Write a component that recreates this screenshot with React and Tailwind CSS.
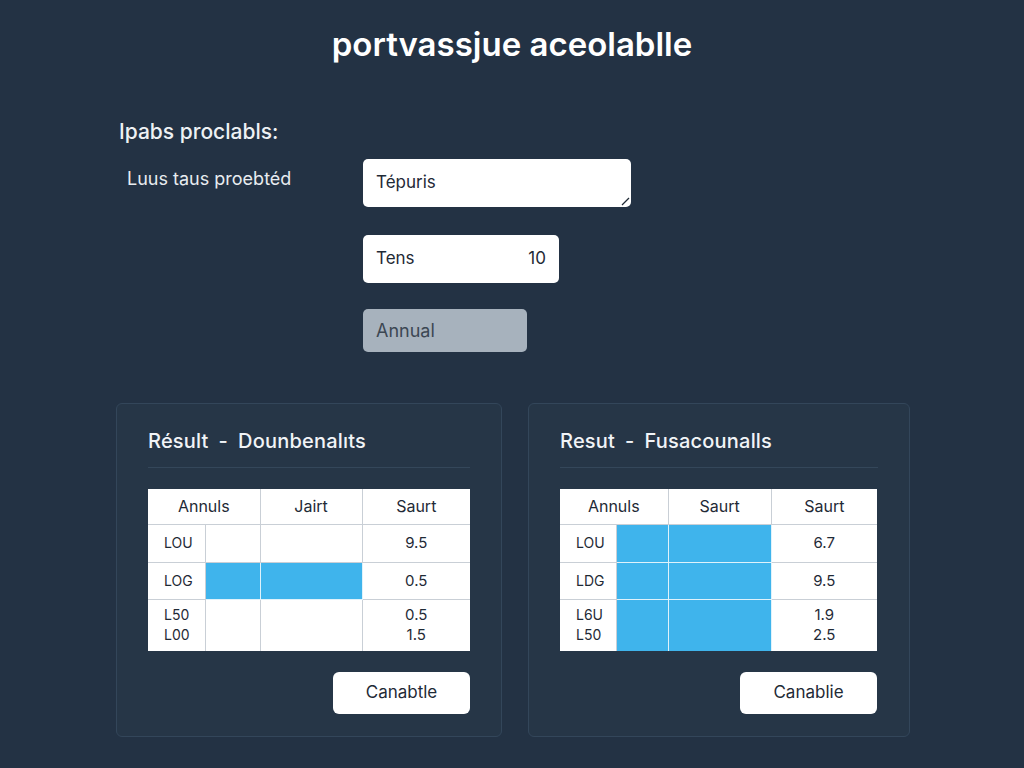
import React from 'react';

const font = { fontFamily: 'Inter, "Noto Sans", sans-serif' };

const tables = [
    {
        title: 'Résult  -  Dounbenalıts',
        head: ['Annuls', 'Jairt', 'Saurt'],
        width: 'w-[322px]',
        cols: ['w-[57px]', 'w-[55px]', 'w-[102px]', 'w-[108px]'],
        rows: [
            { label: ['LOU'], blue: [false, false], val: ['9.5'] },
            { label: ['LOG'], blue: [true, true], val: ['0.5'] },
            { label: ['L50', 'L00'], blue: [false, false], val: ['0.5', '1.5'] },
        ],
        button: 'Canabtle',
    },
    {
        title: 'Resut  -  Fusacounalls',
        head: ['Annuls', 'Saurt', 'Saurt'],
        width: 'w-[317px]',
        cols: ['w-[56px]', 'w-[52px]', 'w-[103px]', 'w-[106px]'],
        rows: [
            { label: ['LOU'], blue: [true, true], val: ['6.7'] },
            { label: ['LDG'], blue: [true, true], val: ['9.5'] },
            { label: ['L6U', 'L50'], blue: [true, true], val: ['1.9', '2.5'] },
        ],
        button: 'Canablie',
    },
];

const heights = ['h-[38px]', 'h-[37px]', 'h-[52px]'];

const ResultCard = ({ data }) => (
    <div className="flex-1 bg-[#263647] border border-[#33465a] rounded-md px-[31px] pt-[22px] pb-[22px]">
        <h3 className="text-[20px] font-medium text-[#f1f4f7] pb-[11px] border-b border-[#34475a] tracking-[0.2px]">
            {data.title.split('  ').map((part, i) => (
                <span key={i} className={i > 0 ? 'ml-[10px]' : ''}>{part}</span>
            ))}
        </h3>
        <table className={`mt-[21px] bg-white border-collapse text-[15px] text-[#1f2a36] table-fixed ${data.width}`}>
            <colgroup>
                {data.cols.map((c, i) => <col key={i} className={c} />)}
            </colgroup>
            <thead>
                <tr className="h-[35px]">
                    <th colSpan={2} className="font-normal text-[16px] border-r border-b border-[#c9cfd6]">{data.head[0]}</th>
                    <th className="font-normal text-[16px] border-r border-b border-[#c9cfd6]">{data.head[1]}</th>
                    <th className="font-normal text-[16px] border-b border-[#c9cfd6]">{data.head[2]}</th>
                </tr>
            </thead>
            <tbody>
                {data.rows.map((row, r) => (
                    <tr key={r} className={heights[r]}>
                        <td className={`pl-4 text-[14px] leading-5 border-r border-[#c9cfd6] ${r < 2 ? 'border-b' : ''}`}>
                            {row.label.map((l) => <div key={l}>{l}</div>)}
                        </td>
                        <td className={`border-r ${r < 2 ? 'border-b' : ''} ${row.blue[0] ? 'bg-[#3fb4ec] border-[#dff2fb]' : 'border-[#c9cfd6]'}`}></td>
                        <td className={`border-r ${r < 2 ? 'border-b' : ''} ${row.blue[1] ? 'bg-[#3fb4ec] border-[#dff2fb]' : 'border-[#c9cfd6]'}`}></td>
                        <td className={`text-center text-[15px] leading-5 border-[#c9cfd6] ${r < 2 ? 'border-b' : ''}`}>
                            {row.val.map((v) => <div key={v}>{v}</div>)}
                        </td>
                    </tr>
                ))}
            </tbody>
        </table>
        <div className={`flex justify-end mt-[21px] ${data.width}`}>
            <button className="bg-white rounded-md w-[137px] h-[42px] text-[17px] text-[#1f2a36]">
                {data.button}
            </button>
        </div>
    </div>
);

export default function App() {
    return (
        <div className="min-h-[768px] w-full bg-[#233244]" style={font}>
            <h1 className="text-center pt-[24px] text-[33px] font-semibold text-white leading-10">
                portvassjue aceolablle
            </h1>
            <div className="px-[119px] mt-[56px]">
                <h2 className="text-[21px] font-medium text-[#eef1f4] leading-6">Ipabs proclabls:</h2>
                <div className="flex mt-[11px]">
                    <div className="w-[244px] pl-2 pt-[10px] text-[18px] text-[#e8ecf0]">Luus taus proebtéd</div>
                    <div className="flex flex-col gap-[28px] mt-[4px]">
                        <div className="relative w-[268px] h-[48px] bg-white rounded-[5px] flex items-center px-[13px] text-[17px] text-[#1f2a36]">
                            Tépuris
                            <svg className="absolute right-[1px] bottom-[1px]" width="9" height="9" viewBox="0 0 9 9">
                                <path d="M1 8 L8 1" stroke="#1f2a36" strokeWidth="1.2" />
                            </svg>
                        </div>
                        <div className="w-[196px] h-[48px] bg-white rounded-[5px] flex items-center justify-between px-[13px] text-[17px] text-[#1f2a36]">
                            <span>Tens</span>
                            <span>10</span>
                        </div>
                        <div className="w-[164px] h-[43px] -mt-[2px] bg-[#a7b2bd] rounded-[5px] flex items-center px-[13px] text-[18px] text-[#3c4753]">
                            Annual
                        </div>
                    </div>
                </div>
            </div>
            <div className="flex gap-[26px] pl-[116px] pr-[114px] mt-[51px] pb-[31px]">
                {tables.map((t) => <ResultCard key={t.title} data={t} />)}
            </div>
        </div>
    );
}
